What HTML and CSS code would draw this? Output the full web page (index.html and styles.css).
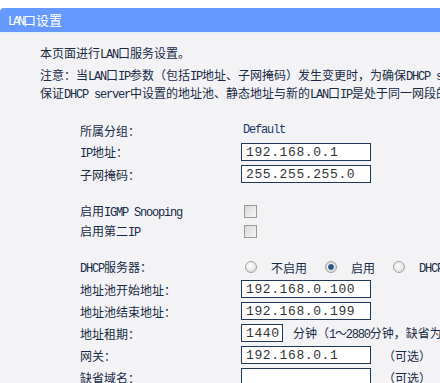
FILE: index.html
```html
<!DOCTYPE html>
<html lang="zh-CN">

<head>
    <meta charset="UTF-8">
    <title>LAN口设置</title>
    <link rel="stylesheet" href="styles.css">
</head>

<body>
    <div class="title-bar"><span class="en">LAN</span>口设置</div>

    <div class="panel">
        <div class="intro">
            <div class="line">本页面进行<span class="en">LAN</span>口服务设置。</div>
            <div class="line note">注意：当<span class="en">LAN</span>口<span class="en">IP</span>参数（包括<span class="en">IP</span>地址、子网掩码）发生变更时，为确保<span class="en">DHCP server</span>能够正常工作，应</div>
            <div class="line">保证<span class="en">DHCP server</span>中设置的地址池、静态地址与新的<span class="en">LAN</span>口<span class="en">IP</span>是处于同一网段的，并请重启路由器。</div>
        </div>

        <!-- LAN settings -->
        <div class="form">
            <div class="row">
                <span class="label">所属分组：</span>
                <span class="value en">Default</span>
            </div>
            <div class="row">
                <span class="label"><span class="en">IP</span>地址：</span>
                <input type="text" class="field" value="192.168.0.1">
            </div>
            <div class="row">
                <span class="label">子网掩码：</span>
                <input type="text" class="field" value="255.255.255.0">
            </div>
        </div>

        <div class="form checks">
            <div class="row short">
                <span class="label">启用<span class="en">IGMP Snooping</span></span>
                <input type="checkbox" class="check">
            </div>
            <div class="row short">
                <span class="label">启用第二<span class="en">IP</span></span>
                <input type="checkbox" class="check">
            </div>
        </div>

        <!-- DHCP server -->
        <div class="form dhcp">
            <div class="row">
                <span class="label"><span class="en">DHCP</span>服务器：</span>
                <div class="radios">
                    <input type="radio" name="dhcp" class="radio" id="dhcp-off">
                    <label for="dhcp-off">不启用</label>
                    <input type="radio" name="dhcp" class="radio" id="dhcp-on" checked>
                    <label for="dhcp-on">启用</label>
                    <input type="radio" name="dhcp" class="radio" id="dhcp-relay">
                    <label for="dhcp-relay"><span class="en">DHCP</span>中继</label>
                </div>
            </div>
            <div class="row">
                <span class="label">地址池开始地址：</span>
                <input type="text" class="field" value="192.168.0.100">
            </div>
            <div class="row">
                <span class="label">地址池结束地址：</span>
                <input type="text" class="field" value="192.168.0.199">
            </div>
            <div class="row">
                <span class="label">地址租期：</span>
                <input type="text" class="field small" value="1440">
                <span class="hint">分钟（<span class="en">1～2880</span>分钟，缺省为<span class="en">120</span>分钟）</span>
            </div>
            <div class="row">
                <span class="label">网关：</span>
                <input type="text" class="field" value="192.168.0.1">
                <span class="hint opt">（可选）</span>
            </div>
            <div class="row">
                <span class="label">缺省域名：</span>
                <input type="text" class="field" value="">
                <span class="hint opt">（可选）</span>
            </div>
        </div>
    </div>
</body>

</html>
```

FILE: styles.css
```css
body {
    margin: 0;
    padding-top: 8px;
    background-color: #ffffff;
    font-family: "Noto Sans CJK SC", sans-serif;
    font-size: 12px;
    color: #172a46;
    overflow: hidden;
}

.en {
    font-family: "Liberation Mono", monospace;
    font-size: 12px;
    letter-spacing: -1.2px;
}

.title-bar {
    height: 24px;
    line-height: 24px;
    padding-left: 8px;
    background-color: #6699ff;
    border-top-left-radius: 4px;
    color: white;
    font-size: 13px;
    border-bottom: 2px solid #e6f0f8;
}

.title-bar .en {
    letter-spacing: -2.2px;
}

.panel {
    background-color: #f3f3f5;
    min-height: 400px;
    padding-top: 10px;
}

.intro {
    padding-left: 40px;
    white-space: nowrap;
    overflow: hidden;
}

.line {
    height: 18px;
    line-height: 18px;
}

.note {
    margin-top: 4px;
}

.form {
    padding-left: 80px;
    margin-top: 17px;
    white-space: nowrap;
}

.checks {
    margin-top: 16px;
}

.dhcp {
    margin-top: 15px;
}

.row {
    display: flex;
    align-items: center;
    height: 22px;
}

.row.short {
    height: 20px;
}

.label {
    width: 161px;
    flex-shrink: 0;
}

.value {
    padding-left: 2px;
    color: #1c3a68;
}

.field {
    box-sizing: border-box;
    width: 130px;
    height: 18px;
    margin: 0;
    padding: 0 0 0 4px;
    border: 1px solid #1f3957;
    background: white;
    font-family: "Liberation Mono", monospace;
    font-size: 13px;
    letter-spacing: 0.6px;
    color: #333333;
    outline: none;
}

.field.small {
    width: 42px;
}

.check {
    appearance: none;
    box-sizing: border-box;
    width: 13px;
    height: 13px;
    margin: 0 0 0 3px;
    border: 1px solid #9a9a9a;
    background: linear-gradient(135deg, #d8d8d8, #f6f6f6);
}

.radios {
    display: flex;
    align-items: center;
}

.radio {
    appearance: none;
    box-sizing: border-box;
    width: 12px;
    height: 12px;
    margin: 0 14px 0 4px;
    border: 1px solid #a0a0a0;
    border-radius: 50%;
    background: radial-gradient(circle at 40% 40%, #ffffff, #d4d4d4);
}

.radio:checked {
    background: radial-gradient(circle, #1d3f73 0, #3a62a0 2.5px, #e8e8e8 3.5px, #d0d0d0 6px);
}

.radios label {
    margin-right: 14px;
}

.hint {
    margin-left: 10px;
}

.hint.opt {
    margin-left: 12px;
}
```
